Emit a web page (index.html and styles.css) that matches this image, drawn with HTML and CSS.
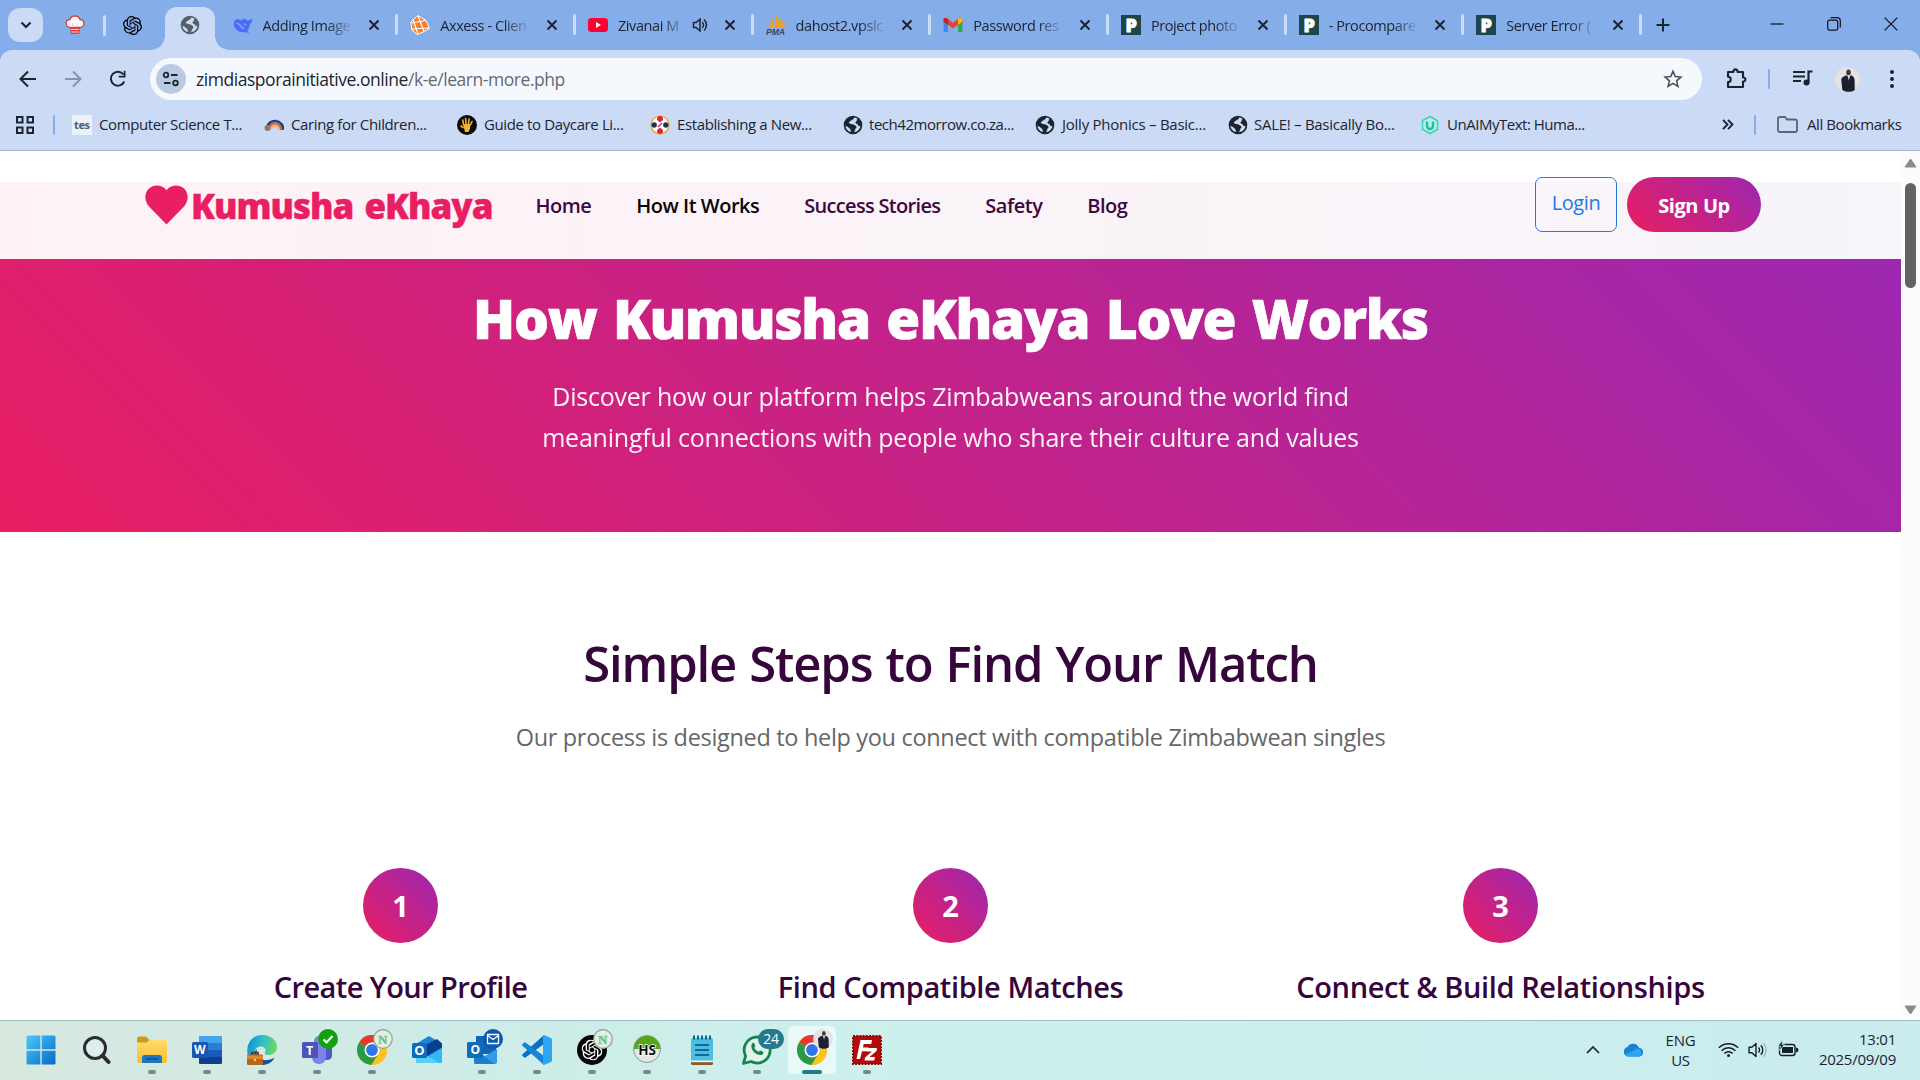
FILE: index.html
```html
<!DOCTYPE html>
<html lang="en">
<head>
<meta charset="utf-8">
<title>Kumusha eKhaya</title>
<link rel="stylesheet" href="styles.css">
</head>
<body>
<svg class="defs" aria-hidden="true">
  <defs>
    <linearGradient id="winblue" x1="0" y1="0" x2="1" y2="1"><stop offset="0" stop-color="#4cc9fb"/><stop offset="1" stop-color="#0668c9"/></linearGradient>
    <linearGradient id="edge" x1="0" y1="0.3" x2="1" y2="0.5"><stop offset="0" stop-color="#138fd8"/><stop offset=".5" stop-color="#2fc0c8"/><stop offset="1" stop-color="#72dc55"/></linearGradient>
    <linearGradient id="folder" x1="0" y1="0" x2="0" y2="1"><stop offset="0" stop-color="#ffdc6e"/><stop offset="1" stop-color="#f8bd32"/></linearGradient>
    <symbol id="i-close" viewBox="0 0 12 12"><path d="M1.5 1.5l9 9m0-9l-9 9" stroke="#1c2430" stroke-width="2" fill="none"/></symbol>
    <symbol id="i-globe" viewBox="0 0 20 20"><circle cx="10" cy="10" r="9.3"/><path d="M11.500 2.500c-1 .8-.6 1.700-1.800 2C8.200 4.900 8 6 6.700 6.500c-1.200.5-.8 1.900.3 2.300 1.500.6 3.500 0 4.500 1.300.8 1 2.200.9 2 2.100-.1 1-1.200 1-1.300 2-.1 1-.9 1.700-1 3 3.700-.5 6-3.300 6.200-6.400-1.300.6-2.200.1-2.600-1-.5-1.200-1.900-.7-2.300-1.700-.5-1.400 1.600-1.500 1.300-2.900-.2-.9.8-.9.8-1.400-.7-.7-2-1.200-3.100-1.300z" class="land"/><path d="M2.500 10.700c.9.900 2.300.8 3 1.800.7 1 2.100 1.200 2.100 2.400 0 .9.300 1.400.6 2-3.300-.5-5.500-3-5.700-6.200z" class="land"/></symbol>
    <symbol id="i-gpt" viewBox="0 0 24 24"><path d="M22.2819 9.8211a5.9847 5.9847 0 0 0-.5157-4.9108 6.0462 6.0462 0 0 0-6.5098-2.9A6.0651 6.0651 0 0 0 4.9807 4.1818a5.9847 5.9847 0 0 0-3.9977 2.9 6.0462 6.0462 0 0 0 .7427 7.0966 5.98 5.98 0 0 0 .511 4.9107 6.051 6.051 0 0 0 6.5146 2.9001A5.9847 5.9847 0 0 0 13.2599 24a6.0557 6.0557 0 0 0 5.7718-4.2058 5.9894 5.9894 0 0 0 3.9977-2.9001 6.0557 6.0557 0 0 0-.7475-7.0729zm-9.022 12.6081a4.4755 4.4755 0 0 1-2.8764-1.0408l.1419-.0804 4.7783-2.7582a.7948.7948 0 0 0 .3927-.6813v-6.7369l2.02 1.1686a.071.071 0 0 1 .038.052v5.5826a4.504 4.504 0 0 1-4.4945 4.4944zm-9.6607-4.1254a4.4708 4.4708 0 0 1-.5346-3.0137l.142.0852 4.783 2.7582a.7712.7712 0 0 0 .7806 0l5.8428-3.3685v2.3324a.0804.0804 0 0 1-.0332.0615L9.74 19.9502a4.4992 4.4992 0 0 1-6.1408-1.6464zM2.3408 7.8956a4.485 4.485 0 0 1 2.3655-1.9728V11.6a.7664.7664 0 0 0 .3879.6765l5.8144 3.3543-2.0201 1.1685a.0757.0757 0 0 1-.071 0l-4.8303-2.7865A4.504 4.504 0 0 1 2.3408 7.872zm16.5963 3.8558L13.1038 8.364 15.1192 7.2a.0757.0757 0 0 1 .071 0l4.8303 2.7913a4.4944 4.4944 0 0 1-.6765 8.1042v-5.6772a.79.79 0 0 0-.407-.667zm2.0107-3.0231l-.142-.0852-4.7735-2.7818a.7759.7759 0 0 0-.7854 0L9.409 9.2297V6.8974a.0662.0662 0 0 1 .0284-.0615l4.8303-2.7866a4.4992 4.4992 0 0 1 6.6802 4.66zM8.3065 12.863l-2.02-1.1638a.0804.0804 0 0 1-.038-.0567V6.0742a4.4992 4.4992 0 0 1 7.3757-3.4537l-.142.0805L8.704 5.459a.7948.7948 0 0 0-.3927.6813zm1.0976-2.3654l2.602-1.4998 2.6069 1.4998v2.9994l-2.5974 1.4997-2.6067-1.4997Z"/></symbol>
    <symbol id="i-p" viewBox="0 0 20 20"><rect width="20" height="20" fill="#1e454d"/><text x="4.600" y="16.500" class="glyph heavy" font-size="18">P</text></symbol>
    <symbol id="i-chrome" viewBox="0 0 30 30"><circle cx="15" cy="15" r="15" fill="#fbc116"/><path d="M15 15L2 7.500A15 15 0 0 1 28 7.500H15z" fill="#e23b2e"/><path d="M15 15L2 7.500A15 15 0 0 0 14.500 30L21.500 18.750z" fill="#2a9a48"/><path d="M15 7.500H28A15 15 0 0 1 14.500 30L21.500 18.750z" fill="#fcc31e"/><circle cx="15" cy="15" r="7.500" fill="#fff"/><circle cx="15" cy="15" r="5.900" fill="#2f77e8"/></symbol>
    <symbol id="i-man" viewBox="0 0 24 24"><circle cx="12" cy="12" r="12" fill="#e3e2e4"/><ellipse cx="13" cy="5.300" rx="2.200" ry="3" fill="#4a3430"/><path d="M6 12c.5-2.500 3-3 5-4l2 1.500L15.500 8c2 1 3 2 3.300 4.500L19 22c-3 2.200-8 2.600-12 0z" fill="#1b2030"/><path d="M12 8l1.300 5 1.200-5z" fill="#e8e8ee"/></symbol>
    <symbol id="i-n" viewBox="0 0 20 20"><circle cx="10" cy="10" r="9.300" fill="#e2efe4" stroke="#8f9d97" stroke-width="1.200"/><text x="5" y="14.500" font-size="13" font-weight="700" fill="#5fb478" stroke="#8ccb9b" stroke-width=".7" font-family="Liberation Serif, serif">N</text></symbol>
  </defs>
</svg>

<div class="screen">
  <div class="tabstrip">
    <div class="tabsearch"><svg width="12" height="8" viewBox="0 0 12 8"><path d="M1.500 1.500L6 6l4.500-4.500" fill="none" stroke="#1c2430" stroke-width="2.200"/></svg></div>
    <svg class="pin chef" viewBox="0 0 20 20" width="20" height="20"><path d="M4.500 12.500C-.5 11 .5 4.500 5 4.500 6.500-.2 13.500-.2 15 4.500c4.500 0 5.500 6.500.5 8z" fill="#fff" stroke="#dd403a" stroke-width="1.300"/><path d="M5 12.500h10l-.8 6.500H5.800z" fill="#dd403a"/><path d="M6 14.500h8M6.500 17h7" stroke="#fff" stroke-width=".8"/><path d="M7.500 8v3.500m2.500-4v4M12.500 8v3.500" stroke="#f0b9b7" stroke-width=".7"/></svg>
    <i class="sep"></i>
    <svg class="pin gpt" width="19" height="19"><use href="#i-gpt"/></svg>
    <div class="activetab"><svg class="globe grey" width="20" height="20"><use href="#i-globe"/></svg></div>

    <div class="tabs">
      <div class="tab"><svg width="20" height="20" viewBox="0 0 20 20"><path d="M.8 8c.2-3 3-4.500 6-3.200C9 5.700 10 5 10.500 3.200c1.800.6 2.300 2 3.800 2.200 1.900.2 3-.6 4.900-1.900.4 3-.7 4.700-2.300 5.500-.2 3-1.400 5-2.700 6.400l2 2c-1.700.6-3 .2-3.900-.5C6.500 18.500.8 14.500.8 8z" fill="#4a6cf7"/><path d="M3.500 8.200c3-.6 4.800 5 7.400 5.600M11 8.700l2 1.500" fill="none" stroke="#86adea" stroke-width="1.500"/></svg><span class="title">Adding Image</span><svg class="x"><use href="#i-close"/></svg></div>
      <div class="tab"><svg width="20" height="20" viewBox="0 0 20 20"><path d="M8 .5L16 5.500l3.500 8L13 17l-6 2.500L2 15 .8 7z" fill="#f57f2b" stroke="#fff" stroke-width="1"/><path d="M8 1l6 15.500M1.500 8L16 5.500M2 14l17-1M3 4.500L8 19" stroke="#fff" stroke-width="1.200" fill="none"/></svg><span class="title">Axxess - Clien</span><svg class="x"><use href="#i-close"/></svg></div>
      <div class="tab"><svg width="20" height="20" viewBox="0 0 20 20"><rect y="3" width="20" height="14" rx="3.500" fill="#ff0033"/><path d="M8 7v6l5-3z" fill="#fff"/></svg><span class="title short">Zivanai M</span><svg class="speaker" width="16" height="16" viewBox="0 0 16 16"><path d="M1.500 5.500h2.500L8 2.200v11.600L4 10.500H1.500z" fill="none" stroke="#1c2430" stroke-width="1.500"/><path d="M10.300 5.200a4 4 0 0 1 0 5.600M12 2.500a7.500 7.500 0 0 1 0 11" fill="none" stroke="#1c2430" stroke-width="1.500"/></svg><svg class="x"><use href="#i-close"/></svg></div>
      <div class="tab"><svg width="20" height="20" viewBox="0 0 20 20"><path d="M1 13C5 10 6 6 7 2c2 4 1 8 0 10.500zM8 12.500c2-4 2.500-7 2-12 4 4 4 9 3 12zM14 12.500c1-3 .6-6-.5-8.500 3 2 5.500 5 5.500 8z" fill="#f79e1b"/><text x="0" y="19.500" font-size="8.500" font-style="italic" font-weight="700" fill="#34466e" font-family="Liberation Sans, sans-serif">PMA</text></svg><span class="title">dahost2.vpslc</span><svg class="x"><use href="#i-close"/></svg></div>
      <div class="tab"><svg width="20" height="20" viewBox="0 0 20 20"><path d="M.5 5v10.500c0 1 .6 1.500 1.500 1.500h3V8.500z" fill="#4285f4"/><path d="M19.500 5v10.500c0 1-.6 1.500-1.500 1.500h-3V8.500z" fill="#34a853"/><path d="M.5 5c0-2 2-2.800 3.500-1.700l6 4.500 6-4.500C17.500 2.200 19.500 3 19.500 5v1.500L10 13.500.5 6.500z" fill="#ea4335"/><path d="M.5 5c0-1.500 1.200-2.300 2.500-2L5 4v6L.5 6.600z" fill="#c5221f"/><path d="M19.500 5c0-1.500-1.200-2.300-2.500-2L15 4v6l4.500-3.400z" fill="#fbbc04"/></svg><span class="title">Password res</span><svg class="x"><use href="#i-close"/></svg></div>
      <div class="tab"><svg width="20" height="20"><use href="#i-p"/></svg><span class="title">Project photo</span><svg class="x"><use href="#i-close"/></svg></div>
      <div class="tab"><svg width="20" height="20"><use href="#i-p"/></svg><span class="title">- Procompare</span><svg class="x"><use href="#i-close"/></svg></div>
      <div class="tab"><svg width="20" height="20"><use href="#i-p"/></svg><span class="title">Server Error (</span><svg class="x"><use href="#i-close"/></svg></div>
    </div>
    <svg class="plus" width="14" height="14" viewBox="0 0 14 14"><path d="M7 .5v13M.5 7h13" stroke="#1c2430" stroke-width="2"/></svg>
    <div class="winctl">
      <svg width="14" height="14" viewBox="0 0 14 14"><path d="M.5 7h13" stroke="#111" stroke-width="1.200"/></svg>
      <svg width="14" height="14" viewBox="0 0 14 14" fill="none" stroke="#111" stroke-width="1.200"><rect x=".7" y="3.200" width="10" height="10" rx="1.800"/><path d="M3.500 1c.3-.3.8-.3 1.500-.3h5c2.200 0 3.300 1.200 3.300 3.300v5c0 .8 0 1.300-.5 1.600"/></svg>
      <svg width="14" height="14" viewBox="0 0 14 14"><path d="M.7.700l12.600 12.600m0-12.600L.7 13.300" stroke="#111" stroke-width="1.200"/></svg>
    </div>
  </div>

  <div class="toolbar-wrap"><div class="toolbar">
    <svg class="back" width="18" height="18" viewBox="0 0 18 18"><path d="M17 9H2M9 1.500L1.500 9 9 16.500" fill="none" stroke="#1c2430" stroke-width="2"/></svg>
    <svg class="fwd" width="18" height="18" viewBox="0 0 18 18"><path d="M1 9h15M9 1.500L16.500 9 9 16.500" fill="none" stroke="#8594ae" stroke-width="2"/></svg>
    <svg class="reload" width="18" height="18" viewBox="0 0 18 18"><path d="M15.300 11.500A7 7 0 1 1 14.500 4.500" fill="none" stroke="#1c2430" stroke-width="2"/><path d="M16.500.8v6.700H9.800V5.700h4.900V.8z" fill="#1c2430"/></svg>
    <div class="omnibox">
      <span class="site"><svg width="18" height="16" viewBox="0 0 18 16" fill="none" stroke="#1c2430" stroke-width="1.800"><circle cx="4" cy="4" r="2.300"/><path d="M9 4h6.500M2 12h6.500"/><circle cx="13.500" cy="12" r="2.300"/></svg></span>
      <span class="url">zimdiasporainitiative.online<em>/k-e/learn-more.php</em></span>
      <svg class="star" width="20" height="20" viewBox="0 0 24 24"><path d="M12 2.800l2.700 6.300 6.800.6-5.200 4.500 1.600 6.700-5.900-3.600-5.900 3.600 1.600-6.700-5.200-4.500 6.800-.6z" fill="none" stroke="#4a4f57" stroke-width="1.900"/></svg>
    </div>
    <svg class="puzzle" width="22" height="22" viewBox="0 0 22 22"><path d="M3 5h5.500c-.6-3.500 4.600-3.500 4 0H18v5.500c3.200-.5 3.200 4.500 0 4V20H3v-5c3.600 0 3.600-5.200 0-5.200z" fill="none" stroke="#1c2430" stroke-width="2.100" stroke-linejoin="round"/></svg>
    <i class="bar"></i>
    <svg class="media" width="20" height="16" viewBox="0 0 20 16"><path d="M0 2h12M0 6.500h12M0 11h8" stroke="#1c2430" stroke-width="2"/><path d="M19.500 1.500h-4V12" fill="none" stroke="#1c2430" stroke-width="2.200"/><circle cx="13.500" cy="12.500" r="3" fill="#1c2430"/></svg>
    <svg class="avatar" width="25" height="25"><use href="#i-man"/></svg>
    <svg class="dots" width="4" height="18" viewBox="0 0 4 18" fill="#1c2430"><circle cx="2" cy="2" r="2"/><circle cx="2" cy="9" r="2"/><circle cx="2" cy="16" r="2"/></svg>
  </div></div>

  <div class="bookmarks">
    <svg class="apps" width="18" height="18" viewBox="0 0 18 18" fill="none" stroke="#1c2430" stroke-width="2"><path d="M1 1h5.500v5.500H1zM11.500 1H17v5.500h-5.500zM1 11.500h5.500V17H1zM11.500 11.500H17V17h-5.500z"/></svg>
    <i class="bar"></i>
    <div class="bm b1"><svg width="20" height="20" viewBox="0 0 20 20"><rect width="20" height="20" fill="#eef1f6"/><text x="2" y="13.500" font-size="11" font-weight="700" fill="#41607f" font-family="Open Sans, sans-serif">tes</text></svg><span>Computer Science T...</span></div>
    <div class="bm b2"><svg width="20" height="20" viewBox="0 0 20 20" fill="none"><path d="M3 13a8 8 0 0 1 16 2" stroke="#223f78" stroke-width="2.600"/><path d="M5 14a6 6 0 0 1 12 1" stroke="#e2543d" stroke-width="2"/><path d="M7 14.500a4 4 0 0 1 8 .5" stroke="#f2b45a" stroke-width="2"/><circle cx="3.500" cy="13" r="3" fill="#8a7a62"/></svg><span>Caring for Children...</span></div>
    <div class="bm b3"><svg width="20" height="20" viewBox="0 0 20 20"><circle cx="10" cy="10" r="10" fill="#0b0b0b"/><path d="M6.500 9.500L5.800 5M9 8.500L8.600 3.500M11.500 8.500l.6-4.500M13.300 10l1.700-3.500M6 12.500l-2-1.500" stroke="#f5b332" stroke-width="1.600" stroke-linecap="round"/><path d="M6 9h7.500l-.6 5-1.400 3H8z" fill="#f5b332"/></svg><span>Guide to Daycare Li...</span></div>
    <div class="bm b4"><svg width="20" height="20" viewBox="0 0 20 20"><circle cx="10" cy="10" r="9" fill="#fff" stroke="#e7b04a" stroke-width="1.500"/><circle cx="10" cy="4" r="3" fill="#d7263d"/><circle cx="10" cy="16" r="3" fill="#d7263d"/><circle cx="4.200" cy="10" r="2.700" fill="#1f3158"/><circle cx="15.800" cy="10" r="2.700" fill="#1f3158"/><path d="M6.500 6l7 8M13.500 6l-7 8" stroke="#fff" stroke-width="2.600"/><path d="M8 12l4-4" stroke="#d7263d" stroke-width="1.500"/></svg><span>Establishing a New...</span></div>
    <div class="bm b5"><svg class="globe" width="20" height="20"><use href="#i-globe"/></svg><span>tech42morrow.co.za...</span></div>
    <div class="bm b6"><svg class="globe" width="20" height="20"><use href="#i-globe"/></svg><span>Jolly Phonics – Basic...</span></div>
    <div class="bm b7"><svg class="globe" width="20" height="20"><use href="#i-globe"/></svg><span>SALE! – Basically Bo...</span></div>
    <div class="bm b8"><svg width="20" height="20" viewBox="0 0 20 20"><path d="M10 1.500l7.500 4.200v8.600L10 18.500l-7.500-4.200V5.700z" fill="#b9eee4" stroke="#3cd3b8" stroke-width="1.600"/><path d="M7 6.500v4.500a3 3 0 0 0 6 0V6.500" fill="none" stroke="#18c3a2" stroke-width="2.400"/></svg><span>UnAIMyText: Huma...</span></div>
    <svg class="more" width="12" height="11" viewBox="0 0 12 11"><path d="M1 .8l4.500 4.700L1 10.200M6 .8l4.500 4.700L6 10.200" fill="none" stroke="#1c2430" stroke-width="1.900"/></svg>
    <i class="bar b"></i>
    <svg class="fold" width="21" height="17" viewBox="0 0 21 17"><path d="M1 3q0-2 2-2h5l2 2.500h8q2 0 2 2V14q0 2-2 2H3q-2 0-2-2z" fill="none" stroke="#5d6470" stroke-width="1.800"/></svg>
    <span class="all">All Bookmarks</span>
  </div>

  <div class="viewport">
    <main class="page">
      <header class="site-header">
        <svg class="heart" width="43" height="40" viewBox="0 0 43 40"><path d="M21.500 39.500L4 21.500C-1 15.500-.8 8 4 3.500 9-.8 17-.6 21.500 5.200 26-.6 34-.8 39 3.500c4.800 4.500 5 12 0 18z" fill="#e91e63"/></svg>
        <span class="brand">Kumusha eKhaya</span>
        <nav class="nav"><a>Home</a><a class="current">How It Works</a><a class="stories">Success Stories</a><a>Safety</a><a>Blog</a></nav>
        <a class="login">Login</a>
        <a class="signup">Sign Up</a>
      </header>
      <section class="hero">
        <h1>How Kumusha eKhaya Love Works</h1>
        <p>Discover how our platform helps Zimbabweans around the world find<br>meaningful connections with people who share their culture and values</p>
      </section>
      <section class="steps">
        <h2>Simple Steps to Find Your Match</h2>
        <p class="lead">Our process is designed to help you connect with compatible Zimbabwean singles</p>
        <div class="grid">
          <div class="step"><span class="num">1</span><h3 class="tight">Create Your Profile</h3></div>
          <div class="step"><span class="num">2</span><h3>Find Compatible Matches</h3></div>
          <div class="step"><span class="num">3</span><h3>Connect &amp; Build Relationships</h3></div>
        </div>
      </section>
    </main>
    <div class="scrollbar">
      <svg width="13" height="10" viewBox="0 0 13 10"><path d="M6.500 1L12 9H1z" fill="#8a8a8a" stroke="#8a8a8a" stroke-linejoin="round"/></svg>
      <span class="thumb"></span>
      <svg class="down" width="13" height="10" viewBox="0 0 13 10"><path d="M6.500 9L12 1H1z" fill="#8a8a8a" stroke="#8a8a8a" stroke-linejoin="round"/></svg>
    </div>
  </div>

  <footer class="taskbar">
    <div class="apps-row">
      <div class="app start"><svg width="30" height="30" viewBox="0 0 30 30" fill="url(#winblue)"><path d="M2 .5h12.300v13.800H.5V2Q.5.500 2 .5zM15.700.500H28q1.500 0 1.500 1.500v12.300H15.700zM.5 15.700h13.800v13.800H2q-1.500 0-1.500-1.500zM15.700 15.700h13.800V28q0 1.500-1.500 1.500H15.700z"/></svg></div>
      <div class="app"><svg width="28" height="30" viewBox="0 0 28 30"><circle cx="12" cy="13" r="10.500" fill="#dfeeed" stroke="#2a2c30" stroke-width="3"/><path d="M19.500 20.500l6 6.500" stroke="#2a2c30" stroke-width="4" stroke-linecap="round"/></svg></div>
      <div class="app run"><svg width="30" height="30" viewBox="0 0 30 30"><path d="M0 4q0-2.500 2.500-2.500H9l3.500 3.500H28v8H0z" fill="#d39a16"/><path d="M0 7.500h10l2.500-2.700H28q2 0 2 2V26q0 2-2 2H2q-2 0-2-2z" fill="url(#folder)"/><path d="M5 28v-5q0-3 3-3h14q3 0 3 3v5z" fill="#1b76bf"/><path d="M9 24h12" stroke="#0e4f8e" stroke-width="1.500"/></svg></div>
      <div class="app run"><svg width="30" height="30" viewBox="0 0 30 30"><path d="M7 2q0-1 1-1h21q1 0 1 1v6H7z" fill="#41a5ee"/><path d="M7 8h23v7H7z" fill="#2b7cd3"/><path d="M7 15h23v7H7z" fill="#185abd"/><path d="M7 22h23v6q0 1-1 1H8q-1 0-1-1z" fill="#103f91"/><rect y="7" width="16" height="16" rx="1.500" fill="#1a56b4"/><text x="2" y="19.200" class="glyph" font-size="12">W</text></svg></div>
      <div class="app run"><svg width="30" height="30" viewBox="0 0 30 30"><path d="M1 21C-2 9 5 0 15 0c9 0 15 5.500 15 12 0 5-4 8-8.500 8-3 0-4.500-1.200-3.500-2.700 2-3-1-5.800-4-5.800-7 0-8 8-4 13z" fill="url(#edge)"/><path d="M10 14c-2 8 4 12 11 11 3-.4 5-1.500 6.500-2.500C25 28 20 30 15 30 6 29 5 18 10 14z" fill="#0f4fa0"/><rect y="19.500" width="16" height="10.500" rx="1" fill="#b8651c"/><path d="M0 20.500h16v3.500H0z" fill="#df8a2a"/><path d="M5 20v-2.500h6V20" fill="none" stroke="#5a3414" stroke-width="1.600"/><circle cx="8" cy="25" r="1.200" fill="#ffd37a"/></svg></div>
      <div class="app run"><svg width="30" height="30" viewBox="0 0 30 30"><circle cx="26" cy="9" r="3.500" fill="#5059c9"/><circle cx="17" cy="6" r="5" fill="#7b83eb"/><path d="M20 11h10v9q0 5-5 5h-5z" fill="#5059c9"/><path d="M10 11h14v10q0 8-7 8t-7-8z" fill="#7b83eb"/><rect y="7" width="16" height="16" rx="1.500" fill="#4b53bc"/><text x="4" y="19.500" class="glyph" font-size="12.500">T</text></svg><svg class="badge" width="20" height="20" viewBox="0 0 20 20"><circle cx="10" cy="10" r="10" fill="#13a10e"/><path d="M5.500 10.500l3 3 6-6.500" fill="none" stroke="#fff" stroke-width="2.200"/></svg></div>
      <div class="app run"><svg width="30" height="30"><use href="#i-chrome"/></svg><svg class="badge" width="20" height="20"><use href="#i-n"/></svg></div>
      <div class="app"><svg width="30" height="30" viewBox="0 0 30 30"><path d="M4 9L16 1.500q1-.6 2 0L30 9v17q0 2-2 2H6q-2 0-2-2z" fill="#1b86d8"/><path d="M13 10L25 4l5 4.500v4L15 21z" fill="#0a3f8f"/><path d="M5 28L30 13v13q0 2-2 2z" fill="#35b8f1"/><path d="M4 15l24 13H6q-2 0-2-2z" fill="#56d0f6"/><rect y="8" width="15" height="15" rx="1.500" fill="#0f6cbd"/><text x="2.200" y="20" class="glyph" font-size="13">O</text></svg></div>
      <div class="app run"><svg width="30" height="30" viewBox="0 0 30 30"><rect x="9" y="1" width="20" height="18" fill="#1066b5"/><path d="M19 1h10v9H19z" fill="#35a5e8"/><path d="M7 14l11 7 12-7v13q0 2-2 2H9q-2 0-2-2z" fill="#2f9be8"/><path d="M7 15l21 14H9q-2 0-2-2z" fill="#1b7fd0"/><rect y="7" width="16" height="16" rx="1.500" fill="#0f6cbd"/><text x="3.500" y="19.200" class="glyph" font-size="12">O</text></svg><svg class="badge" width="20" height="20" viewBox="0 0 20 20"><circle cx="10" cy="10" r="10" fill="#0a5ab0"/><path d="M4.500 5.500h11v9h-11zM4.500 6.500l5.500 4 5.500-4" fill="none" stroke="#fff" stroke-width="1.300"/></svg></div>
      <div class="app run"><svg width="30" height="30" viewBox="0 0 30 30"><path d="M22 0v9L3.500 22.500Q3 23 2 22.300L.5 21q-.8-1 0-1.800z" fill="#0d6fc0"/><path d="M22 30v-9L3.500 7.500Q3 7 2 7.700L.5 9q-.8 1 0 1.800z" fill="#1485d6"/><path d="M22 0l7 3q1 .5 1 2v20q0 1.500-1 2l-7 3q-1-.5-1-2V2q0-1.500 1-2z" fill="#2ba6f0"/></svg></div>
      <div class="app run"><svg width="30" height="30" viewBox="0 0 30 30"><circle cx="15" cy="15" r="15" fill="#060606"/><svg x="4.500" y="4.500" width="21" height="21" fill="#fff"><use href="#i-gpt"/></svg></svg><svg class="badge" width="20" height="20"><use href="#i-n"/></svg></div>
      <div class="app run"><svg width="28" height="28" viewBox="0 0 28 28"><circle cx="14" cy="14" r="13.500" fill="#e6e8e6" stroke="#8f9690"/><path d="M.8 14a13.200 13.200 0 0 1 26.400 0z" fill="#57a519"/><text x="5.200" y="19.500" font-size="13.500" font-weight="700" fill="#111" stroke="#fff" stroke-width="1.500" paint-order="stroke" font-family="Open Sans, sans-serif">HS</text></svg></div>
      <div class="app run"><svg width="24" height="30" viewBox="0 0 24 30"><rect x="1" y="3" width="22" height="25" rx="1.500" fill="#4cbfe0"/><path d="M1 27h22v1.500q0 1.500-1.500 1.500h-19Q1 30 1 28.500z" fill="#8a5a2c"/><path d="M1 25.500h22v1.700H1z" fill="#f2f2f2"/><path d="M5 10h14M5 15h14M5 20h14" stroke="#15669a" stroke-width="1.800"/><path d="M4 .5v4M8 .5v4M12 .5v4M16 .5v4M20 .5v4" stroke="#14618e" stroke-width="2"/></svg></div>
      <div class="app run"><svg width="30" height="30" viewBox="0 0 30 30"><path d="M1.500 28.500L3.600 21A13 13 0 1 1 9 26.500z" fill="#dff3ec" stroke="#148552" stroke-width="2.800" stroke-linejoin="round"/><path d="M10 8.500c1-1 2-.8 2.400.1l.9 2.200c.3.700-.9 1.500-1 2 .9 1.900 2.400 3.300 4.400 4 .7-.2 1.200-1.600 2-1.200l2.300 1.100c.8.600.2 2.600-1.100 3.200C14.500 21.500 7 14 10 8.500z" fill="#148552"/></svg><span class="badge count">24</span></div>
      <div class="app run active"><svg width="30" height="30"><use href="#i-chrome"/></svg><svg class="badge" width="20" height="20"><use href="#i-man"/></svg></div>
      <div class="app run"><svg width="30" height="30" viewBox="0 0 30 30"><rect x="1" y="1" width="28" height="28" fill="#b30b0b" stroke="#8d0606" stroke-width="2" stroke-dasharray="2 1.200"/><path d="M8.500 5H20l-.8 4h-7.500l-.7 3.500h5.500l-.8 3.700H10L8 24H4.500z" fill="#fff"/><path d="M15.500 13H25l-.5 3-7 6h5.500l-.7 3.500H12.500l.6-3 6.700-6h-5z" fill="#fff"/></svg></div>
    </div>
    <div class="tray">
      <svg class="chev" width="14" height="9" viewBox="0 0 14 9"><path d="M1 8l6-6 6 6" fill="none" stroke="#1c2430" stroke-width="1.700"/></svg>
      <svg class="cloud" width="21" height="14" viewBox="0 0 21 14"><path d="M5 13.500a4.800 4.800 0 0 1-.5-9.400A6.300 6.300 0 0 1 16 4.800a4.400 4.400 0 0 1 .5 8.700z" fill="#1a7fd8"/><path d="M2 11.500L14.500 5.500a4.400 4.400 0 0 1 2 8H5q-2 0-3-2z" fill="#2fa4ee"/></svg>
      <div class="lang">ENG<br>US</div>
      <svg class="wifi" width="21" height="16" viewBox="0 0 21 16" fill="none" stroke="#16202a" stroke-width="1.500"><path d="M.8 5.800a13.700 13.700 0 0 1 19.400 0M3.600 8.700a9.800 9.800 0 0 1 13.800 0M6.300 11.500a6 6 0 0 1 8.400 0"/><circle cx="10.500" cy="13.600" r="1.500" fill="#16202a" stroke="none"/></svg>
      <svg class="vol" width="21" height="16" viewBox="0 0 21 16" fill="none" stroke="#16202a" stroke-width="1.400"><path d="M1 5.300h2.800L8 1.500v13L3.800 10.700H1z" stroke-linejoin="round"/><path d="M10.500 5.500a3.500 3.500 0 0 1 0 5M12.800 3.300a6.600 6.600 0 0 1 0 9.400"/><path d="M15.300 1.200a9.700 9.700 0 0 1 0 13.600" stroke="#9dbcbd"/></svg>
      <svg class="bat" width="21" height="17" viewBox="0 0 21 17"><rect x="1.500" y="4.500" width="15.500" height="11" rx="2.500" fill="none" stroke="#16202a" stroke-width="1.400"/><path d="M4 7h11v6H4z" fill="#16202a"/><path d="M18 7.500q2.500.2 2.500 2.500T18 12.500z" fill="#16202a"/><path d="M4.500 0L0 6h2.500L1.500 10.500 6.500 4.500H4z" fill="#16202a" stroke="#cceeee" stroke-width=".7"/></svg>
      <div class="clock">13:01<br>2025/09/09</div>
    </div>
  </footer>
</div>
</body>
</html>
```
FILE: styles.css
```css
* { box-sizing: border-box; }
body { margin: 0; overflow: hidden; font-family: "Open Sans", "Noto Sans", sans-serif; color: #1c2430; }
svg { display: block; flex: none; }
.defs { position: absolute; width: 0; height: 0; }
.glyph { fill: #fff; font-family: "Open Sans", sans-serif; font-weight: 700; }
.heavy { font-weight: 800; stroke: #fff; stroke-width: .8px; }
.screen { width: 1920px; height: 1080px; display: flex; flex-direction: column; background: #fff; overflow: hidden; }

/* tab strip */
.tabstrip { height: 50px; flex: none; display: flex; align-items: center; background: #85ade9; }
.tabsearch { width: 35px; height: 34px; margin-left: 8px; border-radius: 12px; background: #cbdbf5; display: flex; align-items: center; justify-content: center; }
.chef { margin-left: 22px; }
.sep { width: 3px; height: 21px; margin-left: 18px; border-radius: 2px; background: #c9dcf8; }
.pin.gpt { margin-left: 17px; }
.activetab { position: relative; align-self: flex-end; width: 50px; height: 43px; margin-left: 23px; border-radius: 12px 12px 0 0; background: #ccdbf5; display: flex; align-items: center; justify-content: center; padding-bottom: 7px; }
.activetab::before, .activetab::after { content: ""; position: absolute; bottom: 0; width: 14px; height: 14px; }
.activetab::before { left: -14px; background: radial-gradient(circle at 0 0, transparent 13.500px, #ccdbf5 14px); }
.activetab::after { right: -14px; background: radial-gradient(circle at 100% 0, transparent 13.500px, #ccdbf5 14px); }
.globe { fill: #1c2430; }
.land { fill: #ccdbf5; }
.globe.grey { fill: #566066; }
.tabs { display: flex; margin-left: 4.500px; }
.tab { width: 177.700px; height: 34px; flex: none; display: flex; align-items: center; padding: 0 17px 0 13px; position: relative; }
.tab::after { content: ""; position: absolute; right: -1px; top: 6px; width: 3px; height: 21px; border-radius: 2px; background: #c9dcf8; }
.title { width: 92px; margin-left: 10px; margin-top: 1px; font-size: 14.500px; letter-spacing: -.4px; white-space: nowrap; -webkit-mask-image: linear-gradient(90deg, #000 64px, transparent 91px); mask-image: linear-gradient(90deg, #000 64px, transparent 91px); }
.title.short { width: 66px; -webkit-mask-image: linear-gradient(90deg, #000 44px, transparent 68px); mask-image: linear-gradient(90deg, #000 44px, transparent 68px); }
.speaker { margin-left: 8px; }
.x { width: 12px; height: 12px; margin-left: auto; }
.plus { margin-left: 15px; }
.winctl { display: flex; gap: 43px; margin-left: auto; padding-right: 22px; margin-top: -2px; }

/* toolbar */
.toolbar-wrap { background: #85ade9; flex: none; }
.toolbar { height: 58px; display: flex; align-items: center; background: #ccdbf5; border-radius: 12px 12px 0 0; }
.back { margin-left: 19px; }
.fwd { margin-left: 27px; }
.reload { margin-left: 27px; }
.omnibox { width: 1552px; height: 42px; margin-left: 23px; border-radius: 21px; background: #f5f9fe; display: flex; align-items: center; }
.site { width: 30px; height: 30px; margin-left: 6px; border-radius: 50%; background: #b9cae2; display: flex; align-items: center; justify-content: center; }
.url { margin-left: 10px; font-size: 17.500px; letter-spacing: -.45px; color: #1c2430; white-space: nowrap; }
.url em { font-style: normal; color: #636971; }
.star { margin-left: auto; margin-right: 19px; }
.puzzle { margin-left: 23px; margin-top: -3px; }
.bar { width: 2px; height: 20px; background: #86aeea; border-radius: 1px; }
.toolbar .bar { margin-left: 21px; }
.media { margin-left: 23px; margin-top: -2px; }
.avatar { margin-left: 22px; }
.dots { margin-left: 30px; }

/* bookmarks */
.bookmarks { height: 43px; flex: none; display: flex; align-items: center; padding-bottom: 9px; background: #ccdbf5; border-bottom: 1px solid #9db4d3; font-size: 15px; letter-spacing: -.38px; white-space: nowrap; }
.bookmarks span { margin-top: -1px; }
.apps { margin-left: 16px; }
.bookmarks .bar { margin-left: 19px; }
.bm { display: flex; align-items: center; gap: 7px; flex: none; }
.b1 { margin-left: 17px; width: 192px; }
.b2 { width: 193px; }
.b3 { width: 193px; }
.b4 { width: 193px; }
.b5 { width: 192px; gap: 6px; letter-spacing: -.45px; }
.b6 { width: 193px; gap: 7px; letter-spacing: -.25px; }
.b7 { width: 192px; gap: 6px; letter-spacing: -.28px; }
.b8 { width: 302px; letter-spacing: -.48px; }
.bookmarks .bar.b { margin-left: 20px; }
.fold { margin-left: 21px; }
.all { margin-left: 9px; letter-spacing: -.42px; }

/* web page */
.viewport { height: 869px; flex: none; display: flex; overflow: hidden; }
.page { width: 1901px; }
.site-header { height: 108px; padding: 26px 140px 0 145px; display: flex; align-items: flex-start; background: linear-gradient(#fff 31px, transparent 31px), linear-gradient(90deg, #fef2f6, #f7f5fa); }
.heart { margin-top: 8px; }
.brand { margin-left: 3px; line-height: 57px; font-size: 35px; font-weight: 800; letter-spacing: -1px; word-spacing: 3px; color: #e91e63; white-space: nowrap; -webkit-text-stroke: .4px #e91e63; }
.nav { display: flex; gap: 45px; margin-left: 43px; line-height: 58px; font-size: 20px; font-weight: 600; letter-spacing: -.5px; color: #3d0840; white-space: nowrap; }
.nav .stories { letter-spacing: -.68px; }
.nav .current { color: #0b0408; }
.login { width: 82px; height: 55px; margin-left: auto; border: 1.250px solid #2379e0; border-radius: 7px; text-align: center; line-height: 49px; font-size: 20px; letter-spacing: -.4px; color: #2379e0; }
.signup { width: 134px; height: 55px; margin-left: 10px; border-radius: 28px; text-align: center; line-height: 58px; font-size: 20px; font-weight: 700; letter-spacing: -.4px; color: #fff; background: linear-gradient(45deg, #e91e63, #9c27b0); }
.hero { height: 273px; padding-top: 25px; text-align: center; color: #fff; background: linear-gradient(45deg, #e91e63, #9c27b0); white-space: nowrap; }
.hero h1 { margin: 0 0 25px; line-height: 67px; font-size: 55px; font-weight: 800; letter-spacing: -1.300px; word-spacing: 3.500px; -webkit-text-stroke: .7px #fff; }
.hero p { margin: 0; line-height: 41px; font-size: 25px; letter-spacing: -.22px; opacity: .95; }
.steps { padding-top: 101px; text-align: center; color: #35053c; white-space: nowrap; }
.steps h2 { margin: 0; line-height: 60px; font-size: 49px; font-weight: 600; letter-spacing: -1.150px; word-spacing: 1.500px; }
.lead { margin: 26px 0 0; line-height: 36px; font-size: 23.500px; letter-spacing: -.32px; color: #666; }
.grid { display: grid; grid-template-columns: repeat(3, 550px); justify-content: center; margin-top: 113px; }
.step { display: flex; flex-direction: column; align-items: center; }
.num { width: 75px; height: 75px; border-radius: 50%; line-height: 75px; font-size: 29px; font-weight: 700; color: #fff; background: linear-gradient(45deg, #e91e63, #9c27b0); }
.step h3 { margin: 26px 0 0; line-height: 36px; font-size: 29px; font-weight: 600; letter-spacing: -.4px; }
.step .tight { letter-spacing: -.6px; }
.scrollbar { width: 19px; background: #fcfcfc; display: flex; flex-direction: column; align-items: center; padding: 7px 0 5px; }
.thumb { width: 11px; height: 105px; margin-top: 15px; border-radius: 6px; background: #636363; }
.down { margin-top: auto; }

/* taskbar */
.taskbar { height: 60px; flex: none; display: flex; justify-content: space-between; border-top: 1px solid #9dbdbf; background: linear-gradient(90deg, #d8e8df, #ceebe7 22%, #cdf0ec 45%, #cbecee); }
.apps-row { display: flex; padding-left: 14px; }
.app { position: relative; width: 55px; height: 59px; display: flex; align-items: flex-start; justify-content: center; padding-top: 14px; }
.start { left: -1px; }
.app.run::after { content: ""; position: absolute; left: 24px; top: 49px; width: 8px; height: 4px; border-radius: 2px; background: #76898a; }
.app.active::before { content: ""; position: absolute; left: 4px; top: 5px; width: 48px; height: 48px; border-radius: 5px; background: #e9f8f8; }
.app.active svg { position: relative; }
.app.active::after { left: 18px; width: 20px; background: #24798b; }
.badge, .app.active .badge { position: absolute; left: 29px; top: 8px; }
.count { width: 26px; height: 20px; border-radius: 10px; background: #24798b; color: #fff; text-align: center; line-height: 20px; font-size: 14px; letter-spacing: -.3px; }
.tray { display: flex; align-items: center; font-size: 15px; line-height: 20px; letter-spacing: -.25px; padding-right: 24px; }
.chev { margin-top: -2px; }
.cloud { margin-left: 23px; margin-top: -2px; }
.lang { margin-left: 20px; margin-right: 1px; width: 33px; text-align: center; margin-top: -2px; }
.wifi { margin-left: 20px; margin-top: -2px; }
.vol { margin-left: 9px; margin-top: -2px; }
.bat { margin-left: 9px; margin-top: -4px; }
.clock { width: 97px; text-align: right; margin-top: -3px; }
```
